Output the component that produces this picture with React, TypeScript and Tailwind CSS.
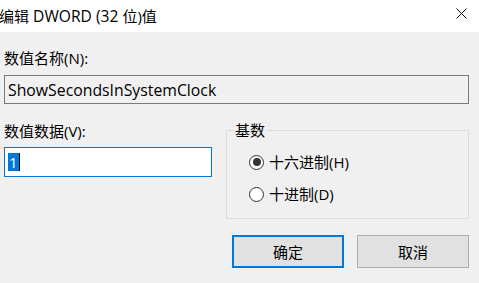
import React from "react";

const font = { fontFamily: '"Open Sans", "Noto Sans CJK SC", sans-serif' };

function Radio({ checked, label }: { checked?: boolean; label: string }) {
    return (
        <div className="flex items-center h-[20px]">
            <span className="w-[15px] h-[15px] rounded-full border border-[#333333] bg-white flex items-center justify-center">
                {checked && <span className="w-[8px] h-[8px] rounded-full bg-[#333333]" />}
            </span>
            <span className="ml-[5px]">{label}</span>
        </div>
    );
}

export default function App() {
    return (
        <div className="w-[479px] h-[283px] bg-[#f0f0f0] text-[15px] leading-[20px] text-black overflow-hidden" style={font}>
            {/* Title bar */}
            <div className="h-[32px] bg-white flex items-center justify-between">
                <span className="-ml-[1px]">
                    编辑<span className="text-[15.6px]"> DWORD (32 </span>位)值
                </span>
                <svg width="11" height="11" viewBox="0 0 11 11" className="mr-[12px] -mt-[6px]">
                    <path d="M0.5 0.5 L10.5 10.5 M10.5 0.5 L0.5 10.5" stroke="#111" strokeWidth="1" fill="none" />
                </svg>
            </div>

            <div className="px-[4px] pr-[10px]">
                {/* Value name */}
                <div className="mt-[16px]">数值名称(N):</div>
                <div className="mt-[7px] h-[29px] border border-[#7a7a7a] flex items-center pl-[3px] text-[15.8px]">
                    ShowSecondsInSystemClock
                </div>

                <div className="flex gap-[14px] mt-[17px]">
                    {/* Value data */}
                    <div className="w-[208px]">
                        <div>数值数据(V):</div>
                        <div className="mt-[6px] h-[30px] border border-[#0078d7] bg-white flex items-center pl-[3px]">
                            <span className="bg-[#0078d7] text-white leading-[18px] px-[1px]">1</span>
                            <span className="w-[1px] h-[18px] bg-black" />
                        </div>
                    </div>

                    {/* Base */}
                    <fieldset className="flex-1 border border-[#dcdcdc] h-[99px] -mt-[1px]">
                        <legend className="ml-[7px] px-[1px]">基数</legend>
                        <div className="pl-[22px] pt-[12px] flex flex-col gap-[12px]">
                            <Radio checked label="十六进制(H)" />
                            <Radio label="十进制(D)" />
                        </div>
                    </fieldset>
                </div>

                {/* Buttons */}
                <div className="flex justify-end gap-[13px] mt-[16px]">
                    <button className="w-[112px] h-[33px] bg-[#e1e1e1] border-2 border-[#0078d7] flex items-center justify-center">
                        确定
                    </button>
                    <button className="w-[112px] h-[33px] bg-[#e1e1e1] border border-[#adadad] flex items-center justify-center">
                        取消
                    </button>
                </div>
            </div>
        </div>
    );
}
